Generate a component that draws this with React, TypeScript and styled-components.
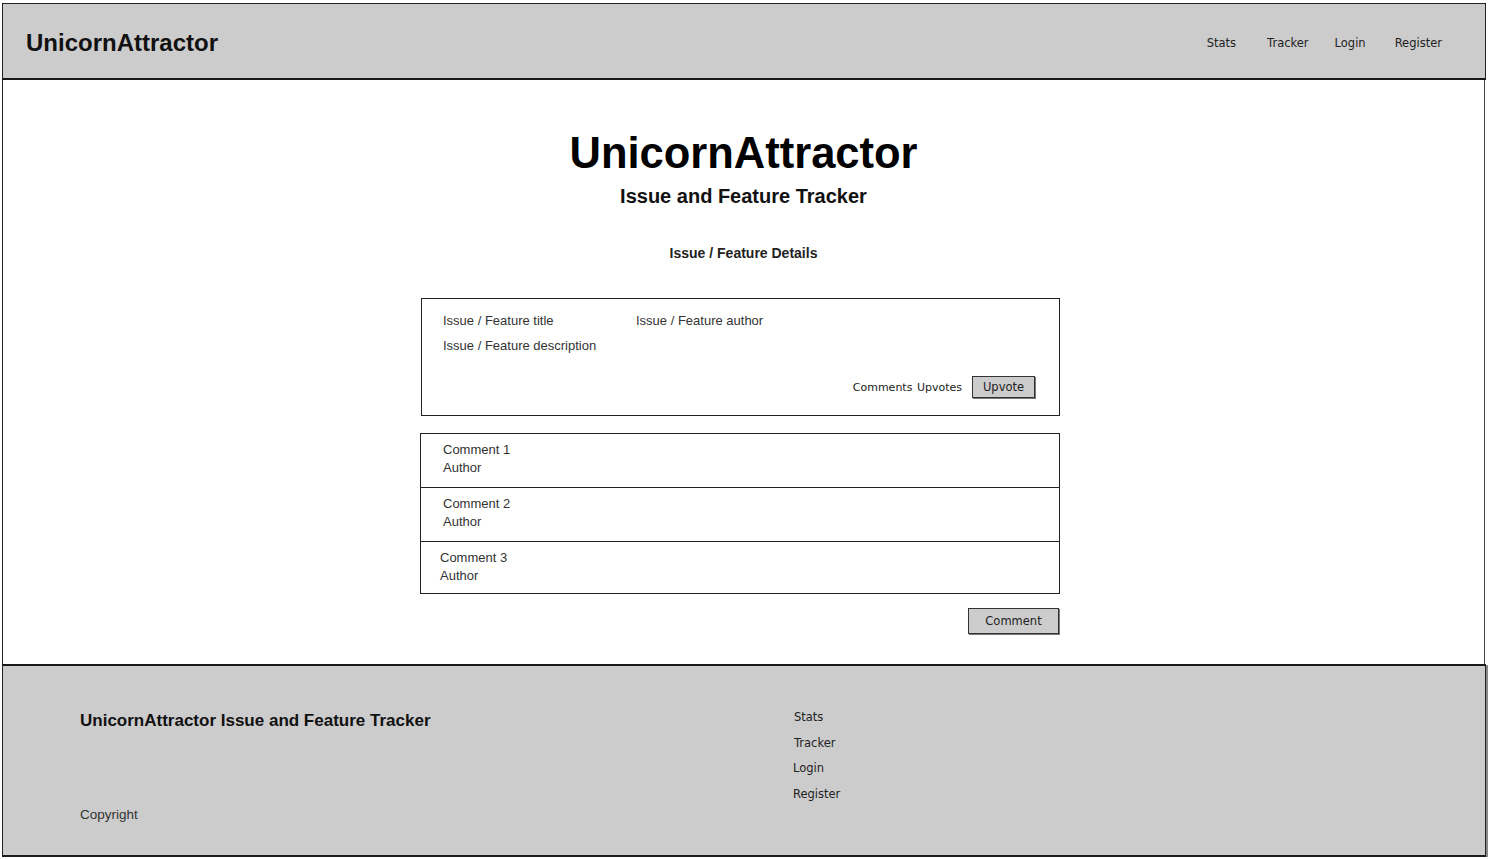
import React from "react";
import styled, { createGlobalStyle } from "styled-components";

const GlobalStyle = createGlobalStyle`
  html, body { margin: 0; padding: 0; background: #ffffff; }
  body { font-family: "Liberation Sans", Arial, sans-serif; color: #111; }
  * { box-sizing: border-box; }
`;

const hand = `"Comic Sans MS", "DejaVu Sans", sans-serif`;

const Frame = styled.div`
  width: 1484px;
  margin: 3px 0 0 2px;
  display: flex;
  flex-direction: column;
`;

const Header = styled.header`
  height: 77px;
  background: #cccccc;
  border: 1px solid #222;
  border-bottom: 2px solid #1a1a1a;
  display: flex;
  align-items: center;
  justify-content: space-between;
  padding: 3px 43px 0 23px;
`;

const Brand = styled.div`
  font-size: 24px;
  font-weight: 700;
  color: #111;
`;

const Nav = styled.nav`
  display: flex;
  align-items: center;
`;

const NavLink = styled.a<{ $ml: number }>`
  font-family: ${hand};
  font-size: 11.5px;
  color: #222;
  text-decoration: none;
  margin-left: ${(p) => p.$ml}px;
`;

const Main = styled.main`
  height: 584px;
  border-left: 1px solid #222;
  border-right: 1px solid #444;
  margin-right: 1px;
  background: #fff;
  display: flex;
  flex-direction: column;
  padding-top: 48px;
`;

const Title = styled.h1`
  margin: 0;
  text-align: center;
  font-size: 43.5px;
  line-height: 50px;
  font-weight: 700;
  color: #000;
`;

const Subtitle = styled.h2`
  margin: 6px 0 0;
  text-align: center;
  font-size: 20px;
  line-height: 24px;
  font-weight: 700;
  color: #111;
`;

const SectionLabel = styled.h3`
  margin: 36px 0 0;
  text-align: center;
  font-size: 14px;
  line-height: 18px;
  font-weight: 700;
  color: #222;
`;

const Column = styled.section`
  width: 640px;
  margin-left: 417px;
  display: flex;
  flex-direction: column;
`;

const Card = styled.div`
  margin-top: 36px;
  margin-left: 1px;
  border: 1px solid #222;
  padding: 13px 24px 17px 21px;
  display: flex;
  flex-direction: column;
`;

const Row = styled.div`
  display: flex;
`;

const Field = styled.div<{ $w?: number }>`
  font-size: 13px;
  line-height: 18px;
  color: #333;
  width: ${(p) => (p.$w ? `${p.$w}px` : "auto")};
`;

const Description = styled(Field)`
  margin-top: 7px;
`;

const ActionRow = styled.div`
  margin-top: 21px;
  display: flex;
  justify-content: flex-end;
  align-items: center;
  gap: 10px;
`;

const HandText = styled.span`
  font-family: ${hand};
  font-size: 11px;
  color: #222;
  word-spacing: 1px;
`;

const SketchButton = styled.button<{ $w: number; $h: number }>`
  width: ${(p) => p.$w}px;
  height: ${(p) => p.$h}px;
  background: #cccccc;
  border: 1px solid #333;
  box-shadow: 1px 1px 0 #777;
  font-family: ${hand};
  font-size: 11.5px;
  color: #222;
  padding: 0;
  cursor: pointer;
`;

const CommentList = styled.div`
  margin-top: 17px;
  border: 1px solid #222;
  display: flex;
  flex-direction: column;
`;

const CommentRow = styled.div<{ $indent: number; $h: number }>`
  height: ${(p) => p.$h}px;
  padding: 7px 0 0 ${(p) => p.$indent}px;
  & + & {
    border-top: 1px solid #222;
  }
`;

const CommentLine = styled.div`
  font-size: 13px;
  line-height: 18px;
  color: #333;
`;

const ButtonRow = styled.div`
  margin-top: 14px;
  margin-right: 1px;
  display: flex;
  justify-content: flex-end;
`;

const Footer = styled.footer`
  height: 193px;
  background: #cccccc;
  border: 1px solid #222;
  border-top: 2px solid #1a1a1a;
  border-bottom: 2px solid #1a1a1a;
  box-shadow: 2px 1px 0 #888;
  display: grid;
  grid-template-columns: 790px 1fr;
`;

const FooterLeft = styled.div`
  display: flex;
  flex-direction: column;
  justify-content: space-between;
  padding: 44px 0 31px 77px;
`;

const FooterTitle = styled.div`
  font-size: 17px;
  line-height: 22px;
  font-weight: 700;
  color: #111;
`;

const Copyright = styled.div`
  font-size: 13.5px;
  line-height: 18px;
  color: #333;
`;

const FooterLinks = styled.div`
  display: flex;
  flex-direction: column;
  align-items: flex-start;
  padding-top: 43px;
  gap: 8.6px;
`;

const FooterLink = styled.a<{ $dx: number }>`
  font-family: ${hand};
  font-size: 11.5px;
  line-height: 17px;
  color: #222;
  text-decoration: none;
  margin-left: ${(p) => p.$dx}px;
`;

const navItems = [
  { label: "Stats", ml: 0 },
  { label: "Tracker", ml: 31 },
  { label: "Login", ml: 26 },
  { label: "Register", ml: 29 },
];

const comments = [
  { n: 1, indent: 22, h: 53 },
  { n: 2, indent: 22, h: 54 },
  { n: 3, indent: 19, h: 52 },
];

export default function App() {
  return (
    <>
      <GlobalStyle />
      <Frame>
        <Header>
          <Brand>UnicornAttractor</Brand>
          <Nav>
            {navItems.map((n) => (
              <NavLink key={n.label} href="#" $ml={n.ml}>
                {n.label}
              </NavLink>
            ))}
          </Nav>
        </Header>
        <Main>
          <Title>UnicornAttractor</Title>
          <Subtitle>Issue and Feature Tracker</Subtitle>
          <SectionLabel>Issue / Feature Details</SectionLabel>
          <Column>
            <Card>
              <Row>
                <Field $w={193}>Issue / Feature title</Field>
                <Field>Issue / Feature author</Field>
              </Row>
              <Description>Issue / Feature description</Description>
              <ActionRow>
                <HandText>Comments Upvotes</HandText>
                <SketchButton $w={63} $h={22}>
                  Upvote
                </SketchButton>
              </ActionRow>
            </Card>
            <CommentList>
              {comments.map((c) => (
                <CommentRow key={c.n} $indent={c.indent} $h={c.h}>
                  <CommentLine>Comment {c.n}</CommentLine>
                  <CommentLine>Author</CommentLine>
                </CommentRow>
              ))}
            </CommentList>
            <ButtonRow>
              <SketchButton $w={91} $h={26}>
                Comment
              </SketchButton>
            </ButtonRow>
          </Column>
        </Main>
        <Footer>
          <FooterLeft>
            <FooterTitle>UnicornAttractor Issue and Feature Tracker</FooterTitle>
            <Copyright>Copyright</Copyright>
          </FooterLeft>
          <FooterLinks>
            {navItems.map((n, i) => (
              <FooterLink key={n.label} href="#" $dx={i >= 2 ? 0 : 1}>
                {n.label}
              </FooterLink>
            ))}
          </FooterLinks>
        </Footer>
      </Frame>
    </>
  );
}
